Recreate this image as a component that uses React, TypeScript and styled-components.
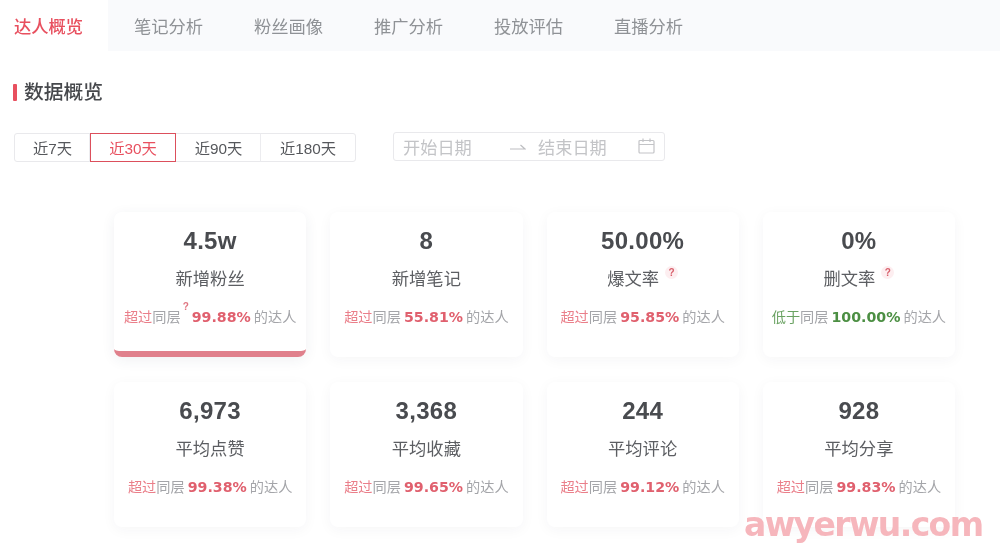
import React from "react"
import styled, { createGlobalStyle } from "styled-components"

const GlobalStyle = createGlobalStyle`
  html, body {
    margin: 0;
    padding: 0;
    background: #fff;
  }
  * {
    box-sizing: border-box;
  }
  body {
    font-family: "Liberation Sans", "Noto Sans CJK SC", sans-serif;
  }
`

const Page = styled.div`
  position: relative;
  width: 1000px;
  height: 552px;
  overflow: hidden;
  background: #fff;
  filter: blur(0.4px);
`

const TabBar = styled.div`
  display: flex;
  height: 51px;
  background: #f9fafc;
`

const Tab = styled.div<{ $active?: boolean }>`
  width: 108px;
  margin-right: 12px;
  padding-left: 14px;
  display: flex;
  align-items: center;
  font-size: 17.3px;
  white-space: nowrap;
  font-weight: ${({ $active }) => ($active ? 500 : 400)};
  color: ${({ $active }) => ($active ? "#e8505f" : "#8f9296")};
  background: ${({ $active }) => ($active ? "#fff" : "transparent")};
`

const Heading = styled.h2`
  margin: 29px 0 0 13px;
  height: 24px;
  display: flex;
  align-items: center;
  gap: 7px;
  font-size: 19.8px;
  line-height: 20px;
  font-weight: 500;
  color: #46484c;

  &::before {
    content: "";
    width: 4px;
    height: 17px;
    border-radius: 1px;
    background: #e8505f;
  }
`

const FilterRow = styled.div`
  display: flex;
  align-items: flex-start;
  margin: 29px 0 0 14px;
`

const RangeGroup = styled.div`
  display: flex;
  height: 29px;
  border: 1px solid #e9e9ec;
  border-radius: 3px;
`

const RangeButton = styled.div<{ $width: number; $active?: boolean }>`
  width: ${({ $width }) => $width}px;
  margin: -1px 0;
  padding-bottom: 2px;
  display: flex;
  align-items: center;
  justify-content: center;
  font-size: 15.3px;
  color: ${({ $active }) => ($active ? "#e8505f" : "#55575b")};
  border: 1px solid ${({ $active }) => ($active ? "#dc4f5c" : "transparent")};
  border-right-color: ${({ $active }) => ($active ? "#dc4f5c" : "#ececef")};

  &:last-child {
    border-right-color: transparent;
  }
`

const DatePicker = styled.div`
  width: 272px;
  height: 29px;
  margin: -1px 0 0 37px;
  padding: 0 9px 1px;
  display: flex;
  align-items: center;
  border: 1px solid #e9e9ec;
  border-radius: 3px;
  color: #c3c4c7;
  font-size: 17.2px;
`

const DateText = styled.span`
  width: 70px;
  white-space: nowrap;
`

const DateArrow = styled.svg`
  width: 16px;
  height: 8px;
  margin: 2px 12px 0 37px;
`

const DateIcon = styled.svg`
  width: 17px;
  height: 16px;
  margin-left: auto;
`

const CardGrid = styled.div`
  display: grid;
  grid-template-columns: repeat(4, 192.25px);
  grid-auto-rows: 145px;
  column-gap: 24px;
  row-gap: 25px;
  margin: 50px 0 0 114px;
`

const Card = styled.div<{ $active?: boolean }>`
  display: flex;
  flex-direction: column;
  align-items: center;
  padding-top: 16px;
  overflow: ${({ $active }) => ($active ? "hidden" : "visible")};
  border-radius: 8px;
  background: #fff;
  box-shadow: 0 3px 14px rgba(40, 50, 80, ${({ $active }) => ($active ? 0.07 : 0.045)});
  border-bottom: ${({ $active }) => ($active ? "6px solid #e0808c" : "none")};
`

const Value = styled.div`
  height: 26px;
  line-height: 26px;
  font-size: 24px;
  font-weight: 700;
  letter-spacing: 0.3px;
  color: #494b4f;
`

const Label = styled.div`
  display: flex;
  margin-top: 12px;
  height: 26px;
  line-height: 26px;
  font-size: 17.3px;
  color: #5c5e62;
`

const Compare = styled.div`
  display: flex;
  align-items: center;
  margin-top: 14px;
  height: 22px;
  line-height: 22px;
  font-size: 14.2px;
  white-space: pre;
  color: #a4a5a9;
`

const Tone = styled.span<{ $tone: "up" | "down" }>`
  color: ${({ $tone }) => ($tone === "up" ? "#ea7f8a" : "#6aa262")};
`

const Percent = styled.strong<{ $tone: "up" | "down" }>`
  margin: 0 3px;
  font-family: "DejaVu Sans", sans-serif;
  font-size: 14.2px;
  color: ${({ $tone }) => ($tone === "up" ? "#e0606e" : "#4c8f43")};
`

const Help = styled.span`
  width: 13px;
  height: 13px;
  margin-left: 6px;
  display: flex;
  align-items: center;
  justify-content: center;
  font-size: 10px;
  font-weight: 700;
  line-height: 1;
  border-radius: 50%;
  color: #d8606c;
  background: #fdeef0;
`

const InlineHelp = styled.span`
  width: 6px;
  margin: -21px 0 0 2px;
  font-size: 10px;
  font-weight: 700;
  line-height: 12px;
  color: #e07783;
`

const Watermark = styled.div`
  position: absolute;
  left: 744px;
  top: 505px;
  font-family: "DejaVu Sans", sans-serif;
  font-size: 33px;
  font-weight: 700;
  line-height: 40px;
  letter-spacing: -1.6px;
  white-space: nowrap;
  color: #f6b6bc;
`

type Stat = {
  value: string
  label: string
  word: string
  tone: "up" | "down"
  percent: string
  active?: boolean
  help?: boolean
}

const tabs = ["达人概览", "笔记分析", "粉丝画像", "推广分析", "投放评估", "直播分析"]

const ranges = [
  { text: "近7天", width: 75 },
  { text: "近30天", width: 86, active: true },
  { text: "近90天", width: 85 },
  { text: "近180天", width: 94 },
]

const stats: Stat[] = [
  { value: "4.5w", label: "新增粉丝", word: "超过", tone: "up", percent: "99.88%", active: true },
  { value: "8", label: "新增笔记", word: "超过", tone: "up", percent: "55.81%" },
  { value: "50.00%", label: "爆文率", word: "超过", tone: "up", percent: "95.85%", help: true },
  { value: "0%", label: "删文率", word: "低于", tone: "down", percent: "100.00%", help: true },
  { value: "6,973", label: "平均点赞", word: "超过", tone: "up", percent: "99.38%" },
  { value: "3,368", label: "平均收藏", word: "超过", tone: "up", percent: "99.65%" },
  { value: "244", label: "平均评论", word: "超过", tone: "up", percent: "99.12%" },
  { value: "928", label: "平均分享", word: "超过", tone: "up", percent: "99.83%" },
]

export default function App() {
  return (
    <Page>
      <GlobalStyle />
      <TabBar>
        {tabs.map((tab, i) => (
          <Tab key={tab} $active={i === 0}>
            {tab}
          </Tab>
        ))}
      </TabBar>
      <Heading>数据概览</Heading>
      <FilterRow>
        <RangeGroup>
          {ranges.map((range) => (
            <RangeButton key={range.text} $width={range.width} $active={range.active}>
              {range.text}
            </RangeButton>
          ))}
        </RangeGroup>
        <DatePicker>
          <DateText>开始日期</DateText>
          <DateArrow viewBox="0 0 16 8" fill="none" stroke="#bdbec1" strokeWidth="1.2">
            <path d="M0 6h15L10.5 2" />
          </DateArrow>
          <DateText>结束日期</DateText>
          <DateIcon viewBox="0 0 17 16" fill="none" stroke="#c3c4c7" strokeWidth="1.2">
            <rect x="1" y="2.5" width="15" height="12.5" rx="1" />
            <path d="M1 6.5h15M5 0.5v3.5M12 0.5v3.5" />
          </DateIcon>
        </DatePicker>
      </FilterRow>
      <CardGrid>
        {stats.map((stat) => (
          <Card key={stat.label} $active={stat.active}>
            <Value>{stat.value}</Value>
            <Label>
              {stat.label}
              {stat.help && <Help>?</Help>}
            </Label>
            <Compare>
              <Tone $tone={stat.tone}>{stat.word}</Tone>同层
              {stat.active && <InlineHelp>?</InlineHelp>}
              <Percent $tone={stat.tone}>{stat.percent}</Percent>的达人
            </Compare>
          </Card>
        ))}
      </CardGrid>
      <Watermark>awyerwu.com</Watermark>
    </Page>
  )
}
